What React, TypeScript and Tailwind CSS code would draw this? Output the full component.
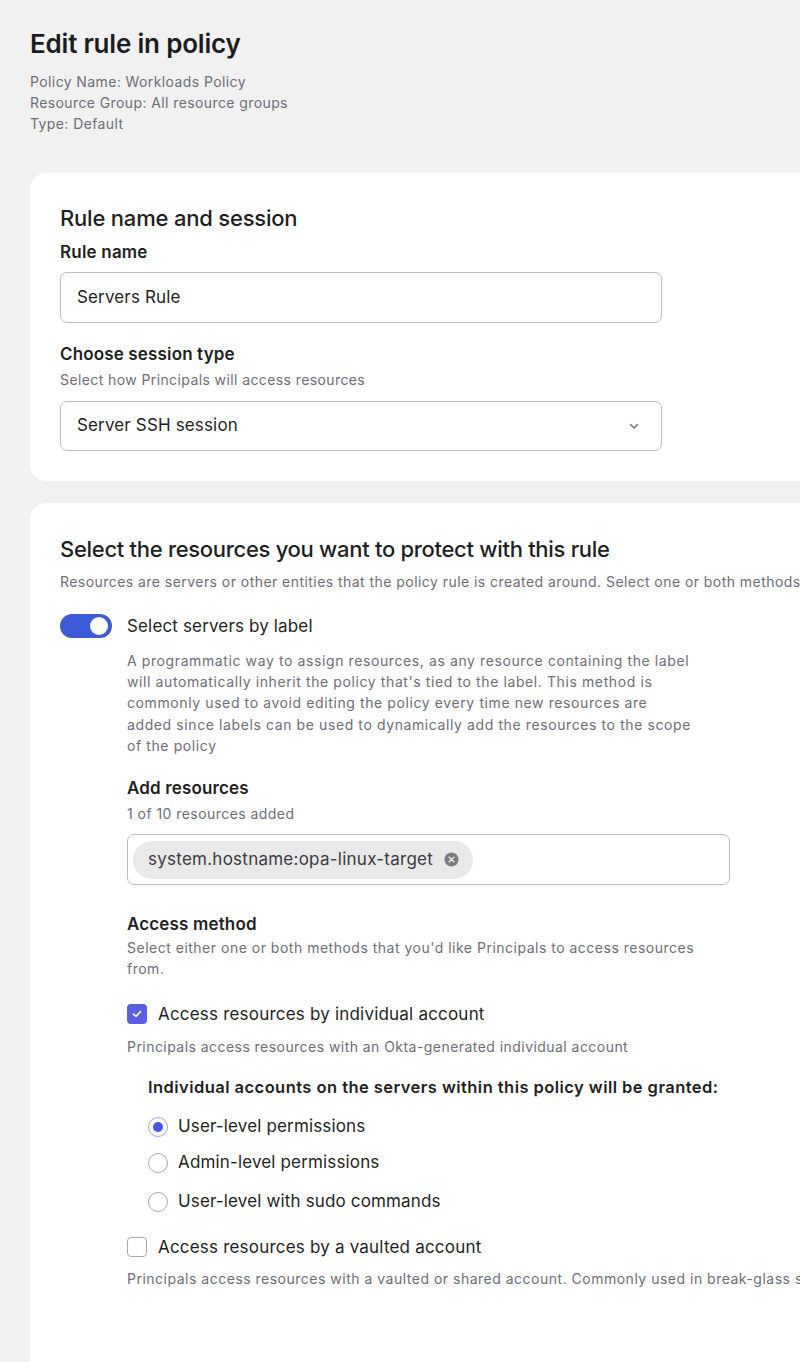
import React from "react";

const font = { fontFamily: "Inter, 'Noto Sans', sans-serif" };

function Chevron() {
  return (
    <svg width="14" height="14" viewBox="0 0 14 14" fill="none">
      <path d="M3.5 5.5 7 9l3.5-3.5" stroke="#6b6b73" strokeWidth="1.4" strokeLinecap="round" strokeLinejoin="round" />
    </svg>
  );
}

function Radio({ checked, label }: { checked?: boolean; label: string }) {
  return (
    <div className="flex items-center gap-[10px] h-[22px]">
      <span
        className={`w-[20px] h-[20px] rounded-full border-[1.5px] flex items-center justify-center bg-white ${
          checked ? "border-[#9ea3e6]" : "border-[#a8a8ae]"
        }`}
      >
        {checked && <span className="w-[10px] h-[10px] rounded-full bg-[#4b55e0]" />}
      </span>
      <span className="text-[17px] tracking-[0.15px] text-[#1f1f23]">{label}</span>
    </div>
  );
}

export default function App() {
  return (
    <div className="w-[800px] h-[1362px] overflow-hidden bg-[#f1f1f1] text-[#1f1f23]" style={font}>
      <div className="pl-[30px] pt-[27px]">
        <h1 className="text-[26px] leading-[34px] font-semibold tracking-[-0.2px] text-[#1d1d21]">Edit rule in policy</h1>
        <div className="mt-[10px] text-[14px] tracking-[0.4px] leading-[21px] text-[#6e6e76]">
          <div>Policy Name: Workloads Policy</div>
          <div>Resource Group: All resource groups</div>
          <div>Type: Default</div>
        </div>

        {/* Card 1 */}
        <div className="mt-[39px] w-[820px] bg-white rounded-[16px] pl-[30px] pt-[31px] pb-[30px]">
          <h2 className="text-[22px] leading-[28px] font-medium tracking-[-0.2px]">Rule name and session</h2>
          <div className="mt-[8px] text-[17px] leading-[24px] font-semibold tracking-[0.2px]">Rule name</div>
          <div className="mt-[8px] w-[602px] h-[51px] rounded-[7px] border border-[#bdbdc2] flex items-center px-[16px] text-[17px] tracking-[0.15px]">
            Servers Rule
          </div>
          <div className="mt-[19px] text-[17px] leading-[24px] font-semibold tracking-[0.15px]">Choose session type</div>
          <div className="mt-[4px] text-[14px] tracking-[0.4px] leading-[20px] text-[#6e6e76]">Select how Principals will access resources</div>
          <div className="mt-[11px] w-[602px] h-[50px] rounded-[7px] border border-[#bdbdc2] flex items-center justify-between pl-[16px] pr-[20px] text-[17px] tracking-[0.15px]">
            <span>Server SSH session</span>
            <Chevron />
          </div>
        </div>

        {/* Card 2 */}
        <div className="mt-[22px] w-[820px] h-[900px] overflow-hidden bg-white rounded-[16px] pl-[30px] pt-[32px]">
          <h2 className="text-[22px] leading-[28px] font-medium tracking-[-0.3px]">
            Select the resources you want to protect with this rule
          </h2>
          <div className="mt-[9px] text-[14px] tracking-[0.45px] leading-[20px] text-[#6e6e76] whitespace-nowrap">
            Resources are servers or other entities that the policy rule is created around. Select one or both methods to add resources.
          </div>

          <div className="mt-[22px] flex items-center gap-[15px]">
            <span className="w-[52px] h-[24px] rounded-full bg-[#3d5bd9] flex items-center justify-end pr-[4px]">
              <span className="w-[18px] h-[18px] rounded-full bg-white" />
            </span>
            <span className="text-[17px] tracking-[0.15px] leading-[24px]">Select servers by label</span>
          </div>

          <div className="pl-[67px]">
            <p className="mt-[12px] w-[600px] text-[14px] tracking-[0.6px] leading-[21.2px] text-[#6e6e76]">
              A programmatic way to assign resources, as any resource containing the label
              <br />
              will automatically inherit the policy that's tied to the label. This method is
              <br />
              commonly used to avoid editing the policy every time new resources are
              <br />
              added since labels can be used to dynamically add the resources to the scope
              <br />
              of the policy
            </p>

            <div className="mt-[20px] text-[17px] leading-[24px] font-semibold tracking-[0.15px]">Add resources</div>
            <div className="mt-[4px] text-[14px] tracking-[0.45px] leading-[20px] text-[#6e6e76]">1 of 10 resources added</div>
            <div className="mt-[10px] w-[603px] h-[51px] rounded-[7px] border border-[#bdbdc2] flex items-center pl-[5px]">
              <span className="h-[38px] rounded-full bg-[#e9e9ea] flex items-center pl-[15px] pr-[14px] gap-[11px] text-[17px] tracking-[0.25px] text-[#3a3a40]">
                system.hostname:opa-linux-target
                <svg width="15" height="15" viewBox="0 0 16 16">
                  <circle cx="8" cy="8" r="7.5" fill="#7a7a80" />
                  <path d="M5.5 5.5l5 5M10.5 5.5l-5 5" stroke="#e9e9ea" strokeWidth="1.6" strokeLinecap="round" />
                </svg>
              </span>
            </div>

            <div className="mt-[27px] text-[17px] leading-[24px] font-semibold tracking-[0.15px]">Access method</div>
            <p className="mt-[1px] w-[600px] text-[14px] tracking-[0.5px] leading-[21px] text-[#6e6e76]">
              Select either one or both methods that you'd like Principals to access resources
              <br />
              from.
            </p>

            <div className="mt-[23px] flex items-center gap-[11px]">
              <span className="w-[20px] h-[20px] rounded-[4px] bg-[#5a5fe6] flex items-center justify-center">
                <svg width="12" height="12" viewBox="0 0 12 12" fill="none">
                  <path d="M2.5 6.2 5 8.5l4.5-5" stroke="white" strokeWidth="1.6" strokeLinecap="round" strokeLinejoin="round" />
                </svg>
              </span>
              <span className="text-[17px] tracking-[0.2px] leading-[24px]">Access resources by individual account</span>
            </div>
            <div className="mt-[11px] text-[14px] tracking-[0.45px] leading-[20px] text-[#6e6e76]">
              Principals access resources with an Okta-generated individual account
            </div>

            <div className="pl-[21px]">
              <div className="mt-[19px] text-[16.5px] tracking-[0.45px] leading-[22px] font-semibold">
                Individual accounts on the servers within this policy will be granted:
              </div>
              <div className="mt-[18px] flex flex-col gap-[14px]">
                <Radio checked label="User-level permissions" />
                <Radio label="Admin-level permissions" />
                <div className="mt-[3px]">
                  <Radio label="User-level with sudo commands" />
                </div>
              </div>
            </div>

            <div className="mt-[22px] flex items-center gap-[11px]">
              <span className="w-[20px] h-[20px] rounded-[4px] border-[1.5px] border-[#a8a8ae] bg-white" />
              <span className="text-[17px] tracking-[0.2px] leading-[24px]">Access resources by a vaulted account</span>
            </div>
            <div className="mt-[10px] text-[14px] tracking-[0.5px] leading-[20px] text-[#6e6e76] whitespace-nowrap">
              Principals access resources with a vaulted or shared account. Commonly used in break-glass scenarios.
            </div>
          </div>
        </div>
      </div>
    </div>
  );
}
